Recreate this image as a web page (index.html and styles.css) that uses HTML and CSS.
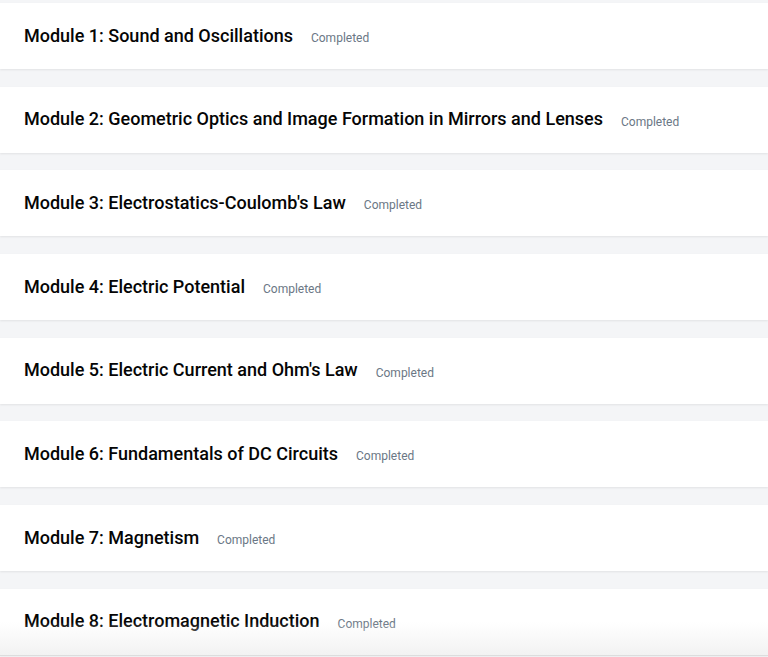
FILE: index.html
```html
<!DOCTYPE html>
<html lang="en">
<head>
    <meta charset="UTF-8">
    <title>Modules</title>
    <link rel="stylesheet" href="styles.css">
</head>
<body>
<div class="modules">
    <div class="module">
        <h3 class="module-title">Module 1: Sound and Oscillations</h3>
        <span class="module-status">Completed</span>
    </div>
    <div class="module">
        <h3 class="module-title">Module 2: Geometric Optics and Image Formation in Mirrors and Lenses</h3>
        <span class="module-status">Completed</span>
    </div>
    <div class="module">
        <h3 class="module-title">Module 3: Electrostatics-Coulomb's Law</h3>
        <span class="module-status">Completed</span>
    </div>
    <div class="module">
        <h3 class="module-title">Module 4: Electric Potential</h3>
        <span class="module-status">Completed</span>
    </div>
    <div class="module">
        <h3 class="module-title">Module 5: Electric Current and Ohm's Law</h3>
        <span class="module-status">Completed</span>
    </div>
    <div class="module">
        <h3 class="module-title">Module 6: Fundamentals of DC Circuits</h3>
        <span class="module-status">Completed</span>
    </div>
    <div class="module">
        <h3 class="module-title">Module 7: Magnetism</h3>
        <span class="module-status">Completed</span>
    </div>
    <div class="module module-last">
        <h3 class="module-title">Module 8: Electromagnetic Induction</h3>
        <span class="module-status">Completed</span>
    </div>
</div>
</body>
</html>
```

FILE: styles.css
```css
* {
    padding: 0;
    margin: 0;
    box-sizing: border-box;
}

html, body {
    width: 100%;
    height: 100%;
    background-color: #f4f5f7;
    font-family: Roboto, "Liberation Sans", sans-serif;
    overflow: hidden;
}

.modules {
    padding-top: 3px;
    display: flex;
    flex-direction: column;
    gap: 17.7px;
}

.module {
    height: 66px;
    background-color: #fff;
    display: flex;
    align-items: center;
    padding-left: 24px;
    box-shadow: 0 1px 2px rgba(0, 0, 0, 0.08);
}

.module-title {
    font-size: 18px;
    font-weight: 500;
    color: #050505;
    margin-bottom: 2px;
}

.module-status {
    font-size: 12px;
    color: #6b7785;
    margin-left: 18px;
    margin-top: 4px;
}

/* fade out the bottom of the list */
.module-last {
    position: relative;
}

.module-last::after {
    content: "";
    position: absolute;
    left: 0;
    right: 0;
    top: 33px;
    height: 33px;
    background: linear-gradient(rgba(243, 243, 243, 0), #f2f2f2);
    border-bottom: 1px solid #dcdddd;
}
```
